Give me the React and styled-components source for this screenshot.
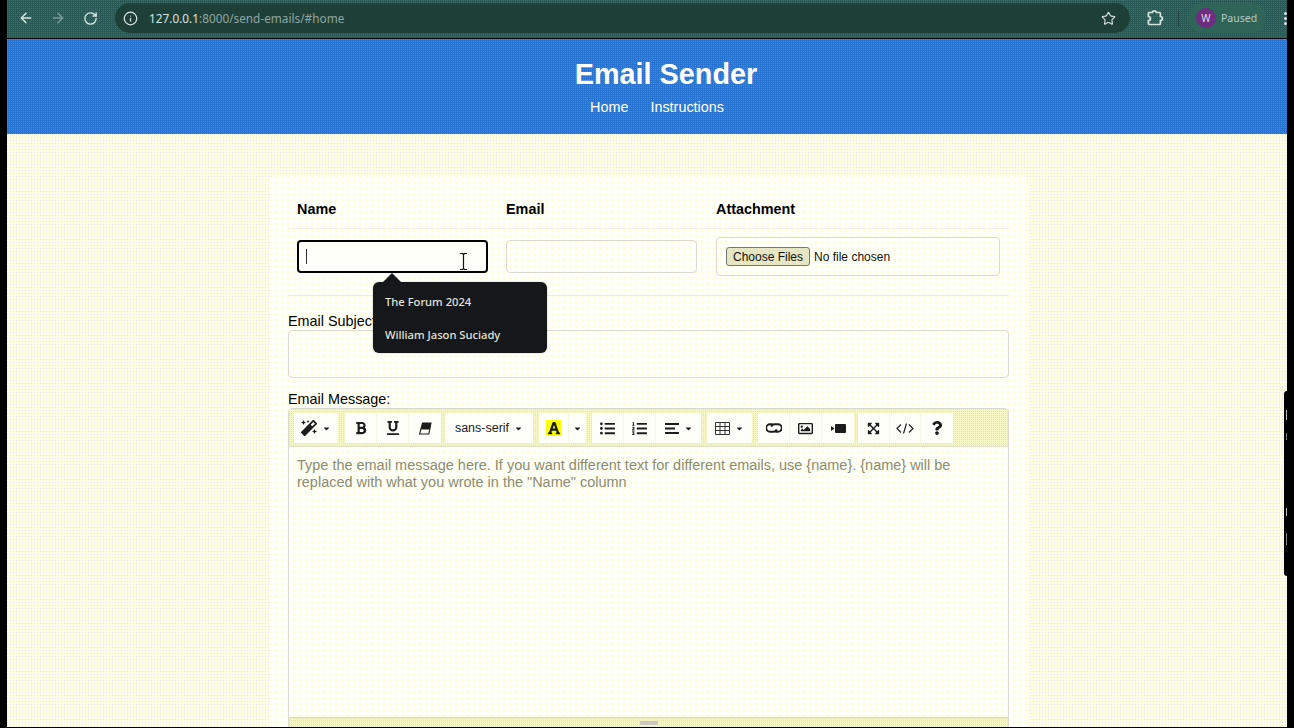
import React from "react";
import styled, { createGlobalStyle } from "styled-components";
import { ArrowLeft, ArrowRight, RotateCw, Info, Star } from "lucide-react";
import { FaMagic, FaBold, FaUnderline, FaFont, FaListUl, FaListOl, FaRegImage, FaExpandArrowsAlt, FaQuestion, FaCaretDown } from "react-icons/fa";

const Global = createGlobalStyle`
  html, body { margin: 0; padding: 0; height: 728px; overflow: hidden; background: #000; }
  * { box-sizing: border-box; }
  body { font-family: "Liberation Sans", Arial, sans-serif; }
`;

const dots = (color, size) => `radial-gradient(circle at 0.5px 0.5px, ${color} 0.5px, transparent 0.65px) 0 0 / ${size}px ${size}px`;
const softDots = (color, size) => `radial-gradient(circle at 1px 1px, ${color} 0.7px, transparent 0.9px) 0 0 / ${size}px ${size}px`;

const Frame = styled.div`
  width: 1294px; height: 728px; padding: 0 7px 1px; position: relative; overflow: hidden; background: #000;
  display: flex; flex-direction: column;
`;
const Chrome = styled.div`
  height: 38px; flex: none; background: ${dots("#3a6a80", 2)}, #295a55; display: flex; align-items: center; padding: 0 0 2px 3px;
  color: #d8e4e0;
`;
const NavBtn = styled.span`
  width: 32px; height: 24px; display: flex; align-items: center; justify-content: center; opacity: ${p => p.$dim ? 0.45 : 1};
`;
const Omnibox = styled.div`
  margin-left: 9px; width: 1015px; height: 30px; border-radius: 15px; background: #1f4038;
  display: flex; align-items: center; padding: 0 10px 0 8px; font-family: "Noto Sans", "Liberation Sans", sans-serif;
`;
const Host = styled.span` margin-left: 11px; color: #d8e4e0; font-size: 11.8px; `;
const UrlRest = styled.span` color: #8ea6a0; font-size: 11.8px; `;
const StarWrap = styled.span` margin-left: auto; display: flex; margin-right: 4px; `;
const ChromeIcon = styled.span` margin-left: 16px; display: flex; width: 18px; `;
const Divider = styled.span` width: 1px; height: 15px; background: #1f4038; margin-left: 14px; `;
const Profile = styled.div`
  margin-left: 9px; width: 78px; height: 30px; border-radius: 15px; background: #2f6458; display: flex; align-items: center; padding-left: 8px; gap: 5px;
  font: 10.5px "Noto Sans", sans-serif; color: #b4cbc5;
`;
const Avatar = styled.span`
  width: 20px; height: 20px; border-radius: 50%; background: #6f2d82; color: #e8d8ee; font-size: 10px; display: flex; align-items: center; justify-content: center;
`;
const Dots = styled.div`
  margin-left: 18px; display: flex; flex-direction: column; gap: 2px;
  span { width: 3px; height: 3px; border-radius: 50%; background: #dde; display: block; }
`;
const Header = styled.header`
  height: 95px; flex: none; background: ${dots("#3f88ee", 2)}, #2874d2; margin-top: 1px; color: #fff; display: flex; flex-direction: column; align-items: center; text-align: center; padding-top: 19px;
`;
const Title = styled.h1`
  margin: 0 0 0 38px; font-size: 28.8px; line-height: 32px; font-weight: 700;
`;
const Nav = styled.nav`
  margin: 9px 0 0 20px; display: flex; gap: 22px; font-size: 14.4px; line-height: 17px;
`;
const Page = styled.main`
  flex: 1; min-height: 0; padding-top: 41px; display: flex; justify-content: center; align-items: flex-start; overflow: hidden;
  background: ${dots("#e4e4ff", 3)}, #fdfde4;
`;
const Card = styled.section`
  width: 759px; margin-left: 3px; height: 560px; background: ${softDots("#ffffc8", 6)}, #fffffa; border-radius: 8px 8px 0 0; padding: 0 19px;
  position: relative; color: #000;
`;
const Table = styled.div`
  display: grid; grid-template-columns: 209px 210px 1fr; padding-left: 9px;
`;
const Th = styled.div`
  height: 54px; padding-top: 26px; font-size: 14.4px; font-weight: 700; line-height: 17px; border-bottom: 1px solid #f2f2e2; margin-left: ${p => p.$first ? "-9px" : 0}; padding-left: ${p => p.$first ? "9px" : 0};
`;
const Td = styled.div`
  height: 67px; padding-top: ${p => p.$top}px; border-bottom: 1px solid #eeeec6; margin-left: ${p => p.$first ? "-9px" : 0}; padding-left: ${p => p.$first ? "9px" : 0};
`;
const NameInput = styled.div`
  width: 191px; height: 33px; border: 2px solid #000; border-radius: 4px; background: #fffffa; display: flex; align-items: center; padding-left: 7px; position: relative;
`;
const TextCaret = styled.span` width: 1px; height: 15px; background: #333; `;
const Beam = styled.svg` position: absolute; left: 160px; top: 11px; `;
const Field = styled.div`
  width: ${p => p.$w || "191px"}; height: ${p => p.$h || "33px"}; border: 1px solid #dadad0; border-radius: 4px;
`;
const FileBox = styled.div`
  width: 284px; height: 39px; border: 1px solid #dadad0; border-radius: 4px; padding: 9px; display: flex;
`;
const FileInput = styled.input`
  font: 12px "Liberation Sans", Arial, sans-serif; color: #111; width: 260px; height: 19px; padding: 0; margin: 0;
  &::file-selector-button { background: #e6e6c4; border: 1px solid #777; border-radius: 3px; padding: 1px 6px; height: 19px; margin: 0 4px 0 0; color: #111; font: 12px "Liberation Sans", Arial, sans-serif; }
`;
const Tooltip = styled.div`
  position: absolute; left: 104px; top: 107px; width: 174px; height: 71px; background: #15171a; border-radius: 6px; color: #e4e4dc; z-index: 5;
  font: 500 11.2px/33px "Noto Sans", "Open Sans", sans-serif; padding: 3px 12px; box-shadow: 0 0 2px rgba(0,0,0,.25);
  &::before { content: ""; position: absolute; left: 10px; top: -9px; border: 9px solid transparent; border-top: 0; border-bottom-color: #15171a; }
`;
const Label = styled.div`
  font-size: 14.4px; line-height: 17px; margin-top: ${p => p.$mt}px;
`;
const Editor = styled.div`
  height: 320px; border: 1px solid #dadad0; border-radius: 4px 4px 0 0; overflow: hidden; display: flex; flex-direction: column;
`;
const Toolbar = styled.div`
  flex: none; height: 38px; background: ${dots("#dedcf4", 2)}, #f6f6c4; display: flex; align-items: flex-start; padding: 4px 0 0 5px; border-bottom: 1px solid #e4e4c8;
`;
const Group = styled.div` display: flex; margin-right: ${p => p.$mr ?? 6}px; `;
const Btn = styled.div`
  width: ${p => p.$w || 32}px; height: 30px; background: #fffffa; color: #1c1c1c; display: flex; align-items: center; justify-content: center; gap: 5px;
  font-size: 12.5px; border-right: 1px solid #f6f6e4; flex: none;
  &:last-child { border-right: 0; }
`;
const ColorA = styled.span`
  background: #ffff00; width: 15px; height: 16px; display: flex; align-items: center; justify-content: center;
`;
const Body = styled.div`
  height: 270px; flex: none; padding: 10px 8px; color: #8c8c70; font-size: 14.47px; line-height: 17px;
`;
const Resizer = styled.div`
  flex: 1; background: ${dots("#dedcf4", 2)}, #f6f6c4; border-top: 1px solid #dadac8; display: flex; justify-content: center; padding-top: 3px;
  span { width: 18px; height: 4px; background: #c8c8c0; display: block; }
`;
const SideOverlay = styled.div`
  position: absolute; right: 0; top: 391px; width: 10px; height: 185px; border-radius: 3px 0 0 3px; background:
    linear-gradient(#000 19px, #bbb 19px, #bbb 29px, #000 29px, #000 42px, #777 42px, #777 49px, #000 49px, #000 117px, #bbb 117px, #bbb 125px, #000 125px, #000 142px, #888 142px, #888 154px, #000 154px) 2px 0 / 1px 100% no-repeat, #000;
`;
const Caret = () => <FaCaretDown size={9} />;

export default function App() {
  return (
    <Frame>
      <Global />
      <Chrome>
        <NavBtn><ArrowLeft size={16} strokeWidth={2.2} /></NavBtn>
        <NavBtn $dim><ArrowRight size={16} strokeWidth={2.2} /></NavBtn>
        <NavBtn><RotateCw size={15} strokeWidth={2.2} /></NavBtn>
        <Omnibox>
          <Info size={15} strokeWidth={2} />
          <Host>127.0.0.1</Host><UrlRest>:8000/send-emails/#home</UrlRest>
          <StarWrap><Star size={15} strokeWidth={1.8} /></StarWrap>
        </Omnibox>
        <ChromeIcon>
          <svg width="18" height="18" viewBox="0 0 18 18"><path d="M3 3.500h3.200a2.200 2.200 0 0 1 4.200 0h3a1 1 0 0 1 1 1v3a2 2 0 0 1 0 4v3a1 1 0 0 1-1 1h-10a1 1 0 0 1-1-1v-3a2 2 0 0 0 0-4v-3a1 1 0 0 1 .6-1z" fill="none" stroke="currentColor" strokeWidth="1.700" /></svg>
        </ChromeIcon>
        <Divider />
        <Profile><Avatar>W</Avatar>Paused</Profile>
        <Dots><span /><span /><span /></Dots>
      </Chrome>
      <Header>
        <Title>Email Sender</Title>
        <Nav><span>Home</span><span>Instructions</span></Nav>
      </Header>
      <Page>
        <Card>
          <Table>
            <Th $first>Name</Th><Th>Email</Th><Th>Attachment</Th>
            <Td $first $top={11}>
              <NameInput>
                <TextCaret />
                <Beam width="9" height="17" viewBox="0 0 9 17"><path d="M1 .5h2.500L4.500 1.500 5.500.5H8M4.500 1.500v14M1 16.500h2.500l1-1 1 1H8" fill="none" stroke="#111" strokeWidth="1.200" /></Beam>
              </NameInput>
            </Td>
            <Td $top={11}><Field /></Td>
            <Td $top={8}><FileBox><FileInput type="file" multiple /></FileBox></Td>
          </Table>
          <Tooltip><div>The Forum 2024</div><div>William Jason Suciady</div></Tooltip>
          <Label $mt={17}>Email Subject:</Label>
          <Field $w="100%" $h="48px" />
          <Label $mt={13}>Email Message:</Label>
          <Editor>
            <Toolbar>
              <Group $mr={7}><Btn $w={44}><FaMagic size={16} /><Caret /></Btn></Group>
              <Group $mr={4}>
                <Btn><FaBold size={14} /></Btn>
                <Btn><FaUnderline size={14} /></Btn>
                <Btn>
                  <svg width="14" height="13" viewBox="0 0 14 13"><path d="M4.500 1H13l-2.200 11H1.600z" fill="none" stroke="#1c1c1c" strokeWidth="1.100" /><path d="M4.500 1H13l-1.200 6.500H3z" fill="#1c1c1c" /></svg>
                </Btn>
              </Group>
              <Group $mr={6}><Btn $w={88}>sans-serif<Caret /></Btn></Group>
              <Group><Btn $w={30}><ColorA><FaFont size={14} /></ColorA></Btn><Btn $w={17}><Caret /></Btn></Group>
              <Group>
                <Btn><FaListUl size={15} /></Btn>
                <Btn><FaListOl size={15} /></Btn>
                <Btn $w={45}>
                  <svg width="14" height="11" viewBox="0 0 14 11"><path d="M0 1h14M0 5.500h10M0 10h14" stroke="#1c1c1c" strokeWidth="1.800" /></svg>
                  <Caret />
                </Btn>
              </Group>
              <Group><Btn $w={45}>
                <svg width="15" height="13" viewBox="0 0 15 13"><path d="M.5.5h14v12H.5zM.5 4.500h14M.5 8.500h14M5 .5v12M10 .5v12" fill="none" stroke="#333" /></svg>
                <Caret /></Btn></Group>
              <Group $mr={4}>
                <Btn>
                  <svg width="16" height="10" viewBox="0 0 16 10"><path d="M6.500 1.200H4a3.800 3.800 0 0 0 0 7.600h3.500a3.400 3.400 0 0 0 3.200-2.400M9.500 8.800H12a3.800 3.800 0 0 0 0-7.600H8.500a3.400 3.400 0 0 0-3.200 2.400" fill="none" stroke="#1c1c1c" strokeWidth="1.900" /></svg>
                </Btn>
                <Btn><FaRegImage size={15} /></Btn>
                <Btn>
                  <svg width="15" height="9" viewBox="0 0 15 9"><path d="M0 2l3.500 2.500L0 7z" fill="#1c1c1c" /><rect x="4" y="0" width="11" height="9" rx="1" fill="#1c1c1c" /></svg>
                </Btn>
              </Group>
              <Group $mr={0}><Btn><FaExpandArrowsAlt size={13} /></Btn><Btn $w={31}>
                <svg width="18" height="11" viewBox="0 0 18 11"><path d="M5 1.500 1 5.500l4 4M13 1.500l4 4-4 4M10.500.5l-3 10" fill="none" stroke="#222" strokeWidth="1.200" /></svg>
              </Btn><Btn><FaQuestion size={14} /></Btn></Group>
            </Toolbar>
            <Body>Type the email message here. If you want different text for different emails, use {"{name}"}. {"{name}"} will be replaced with what you wrote in the "Name" column</Body>
            <Resizer><span /></Resizer>
          </Editor>
        </Card>
      </Page>
      <SideOverlay />
    </Frame>
  );
}
